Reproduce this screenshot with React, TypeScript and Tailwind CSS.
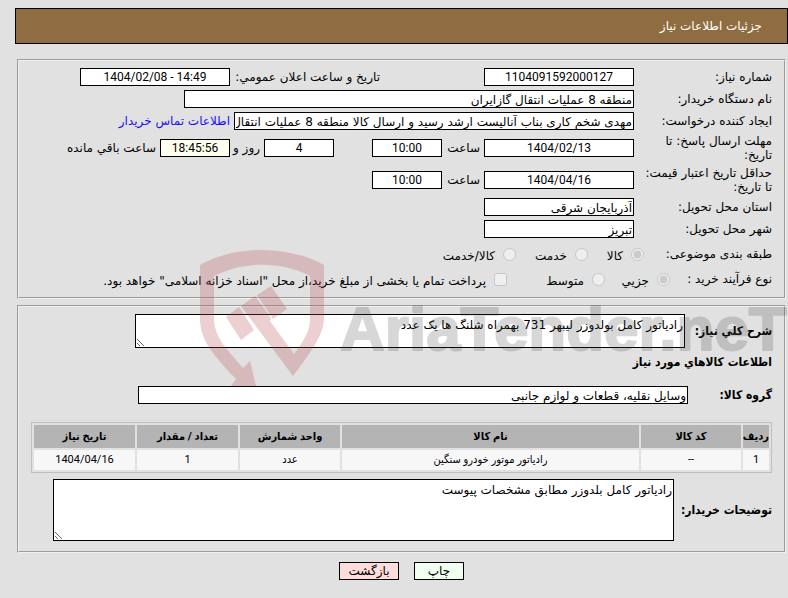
import type { ReactNode } from "react";

const FIELD =
  "h-[18px] min-w-0 border border-black px-[1px] pt-px text-[12px] leading-4 text-black outline-none";

const NUMERIC =
  "h-[18px] min-w-0 border border-black px-[1px] text-center text-[12px] leading-4 text-black outline-none [font-family:Roboto,'Liberation_Sans',sans-serif]";

const STRONG = "font-bold [font-family:'DejaVu_Sans_Condensed','DejaVu_Sans',sans-serif]";

function Row({ label, htmlFor, tall, children }: { label: string; htmlFor?: string; tall?: boolean; children: ReactNode }) {
  return (
    <div className={tall ? "flex h-8 items-center" : "flex h-[22px] items-center"}>
      <label htmlFor={htmlFor} className="w-[138px] shrink-0 pl-2 leading-[14px]">
        {label}
      </label>
      {children}
    </div>
  );
}

function Choice({ type, name, label, checked, gap }: { type: "radio" | "checkbox"; name: string; label: string; checked?: boolean; gap: string }) {
  return (
    <label className={`flex shrink-0 items-center gap-2 whitespace-nowrap ${gap}`}>
      <input type={type} name={name} defaultChecked={checked} disabled className="m-0 size-[13px] shrink-0" />
      <span className="pt-1">{label}</span>
    </label>
  );
}

function Watermark() {
  return (
    <svg className="pointer-events-none absolute top-0 left-0" width="788" height="598" viewBox="0 0 788 598" aria-hidden="true">
      <g fill="#b8444c" opacity="0.25">
        <path d="M200 265C236 245 288 245 324 265V319C323 335 314 348 293 376L258 329L241 306L255 296L271 318L270 321L294 354C305 339 310 331 310 318V276C281 261 243 261 214 276V318C214 337 226 348 243 368L250 361L256 386H231L236 379C214 356 200 340 200 319Z" />
        <path d="M226 317L239 307L254 330L241 340Z" />
        <path d="M257 295L271 286L287 309L273 319Z" />
      </g>
      <g opacity="0.2">
        <text
          x="340"
          y="350"
          direction="ltr"
          fontSize="62"
          fontWeight="700"
          fill="#3c3c3c"
          stroke="#3c3c3c"
          strokeWidth="2"
          strokeLinejoin="round"
          fontFamily="'Liberation Sans', sans-serif"
        >
          AriaTender.neT
        </text>
      </g>
    </svg>
  );
}

const HEADS = [
  { title: "ردیف", width: "w-[26px]" },
  { title: "کد کالا", width: "w-[100px]" },
  { title: "نام کالا", width: "" },
  { title: "واحد شمارش", width: "w-[100px]" },
  { title: "تعداد / مقدار", width: "w-[101px]" },
  { title: "تاریخ نیاز", width: "w-[101px]" },
];
const CELLS = ["1", "--", "رادیاتور موتور خودرو سنگین", "عدد", "1", "1404/04/16"];

const GROUP = "min-w-0 border-2 border-[#f0f0f0] px-3 [border-style:groove]";

export default function App() {
  return (
    <div
      dir="rtl"
      className="relative min-h-screen overflow-hidden bg-[#e1e1e1] pt-2 text-[12px] leading-4 text-black [font-family:'DejaVu_Sans',sans-serif]"
    >
      <header className="ml-[15px] flex h-9 items-center border border-black bg-[#8f6d41] pr-[25px] text-white">
        <h1>جزئیات اطلاعات نیاز</h1>
      </header>

      <main className="mt-[15px] mr-[2px] ml-[17px]">
        <fieldset className={`${GROUP} pt-[5px] pb-[7px]`}>
          <Row label="شماره نیاز:" htmlFor="no">
            <input id="no" readOnly defaultValue="1104091592000127" className={`${NUMERIC} w-[150px] bg-white`} />
            <label htmlFor="announce" className="mr-[104px] w-[150px] shrink-0 whitespace-nowrap">
              تاریخ و ساعت اعلان عمومي:
            </label>
            <input id="announce" dir="ltr" readOnly defaultValue="1404/02/08 - 14:49" className={`${NUMERIC} w-[150px] bg-white`} />
          </Row>
          <Row label="نام دستگاه خریدار:" htmlFor="org">
            <input id="org" readOnly defaultValue="منطقه 8 عملیات انتقال گازایران" className={`${FIELD} w-[450px] bg-white`} />
          </Row>
          <Row label="ایجاد کننده درخواست:" htmlFor="creator">
            <input
              id="creator"
              readOnly
              defaultValue="مهدی شخم کاری بناب آنالیست ارشد رسید و ارسال کالا منطقه 8 عملیات انتقال گازایران"
              className={`${FIELD} w-[400px] bg-white`}
            />
            <a href="#contact" className="mr-1 whitespace-nowrap text-[#1a0dff]">
              اطلاعات تماس خریدار
            </a>
          </Row>
          <Row label="مهلت ارسال پاسخ: تا تاریخ:" htmlFor="deadline" tall>
            <input id="deadline" readOnly defaultValue="1404/02/13" className={`${NUMERIC} w-[150px] bg-white`} />
            <label htmlFor="deadline-hour" className="w-[42px] shrink-0 pr-1">ساعت</label>
            <input id="deadline-hour" readOnly defaultValue="10:00" className={`${NUMERIC} w-[70px] bg-white`} />
            <input aria-label="روز" readOnly defaultValue="4" className={`${NUMERIC} mr-[38px] w-[70px] bg-white`} />
            <span className="w-[34px] shrink-0 pr-1 whitespace-nowrap">روز و</span>
            <input id="left" readOnly defaultValue="18:45:56" className={`${NUMERIC} w-[70px] bg-[#fffff0]`} />
            <label htmlFor="left" className="mr-1 whitespace-nowrap">ساعت باقي مانده</label>
          </Row>
          <Row label="حداقل تاریخ اعتبار قیمت: تا تاریخ:" htmlFor="valid" tall>
            <input id="valid" readOnly defaultValue="1404/04/16" className={`${NUMERIC} w-[150px] bg-white`} />
            <label htmlFor="valid-hour" className="w-[42px] shrink-0 pr-1">ساعت</label>
            <input id="valid-hour" readOnly defaultValue="10:00" className={`${NUMERIC} w-[70px] bg-white`} />
          </Row>
          <Row label="استان محل تحویل:" htmlFor="province">
            <input id="province" readOnly defaultValue="آذربایجان شرقی" className={`${FIELD} w-[150px] bg-white`} />
          </Row>
          <Row label="شهر محل تحویل:" htmlFor="city">
            <input id="city" readOnly defaultValue="تبریز" className={`${FIELD} w-[150px] bg-white`} />
          </Row>
          <div className="flex h-7 items-center">
            <span className="w-32 shrink-0">طبقه بندی موضوعی:</span>
            <Choice type="radio" name="kind" label="کالا" checked gap="w-14" />
            <Choice type="radio" name="kind" label="خدمت" gap="w-[72px]" />
            <Choice type="radio" name="kind" label="کالا/خدمت" gap="" />
          </div>
          <div className="flex h-[22px] items-center">
            <span className="w-[102px] shrink-0">نوع فرآیند خرید :</span>
            <Choice type="radio" name="process" label="جزیي" checked gap="w-[65px]" />
            <Choice type="radio" name="process" label="متوسط" gap="w-[98px]" />
            <Choice
              type="checkbox"
              name="treasury"
              label={'پرداخت تمام یا بخشی از مبلغ خرید،از محل "اسناد خزانه اسلامی" خواهد بود.'}
              gap=""
            />
          </div>
        </fieldset>

        <fieldset className={`${GROUP} mt-[6px] pt-[7px] pb-[10px]`}>
          <div className="flex items-center">
            <label htmlFor="summary" className={`${STRONG} w-[87px] shrink-0`}>شرح کلي نیاز:</label>
            <textarea
              id="summary"
              readOnly
              defaultValue="رادیاتور کامل بولدوزر لیبهر 731 بهمراه شلنگ ها یک عدد"
              className="block h-[34px] w-[550px] min-w-0 resize border border-black bg-white px-px py-[2px] text-[12px] leading-4 outline-none"
            />
          </div>
          <h2 className={`${STRONG} mt-[6px]`}>اطلاعات کالاهاي مورد نیاز</h2>
          <div className="mt-4 flex items-center">
            <label htmlFor="group" className={`${STRONG} w-[84px] shrink-0`}>گروه کالا:</label>
            <input id="group" readOnly defaultValue="وسایل نقلیه، قطعات و لوازم جانبی" className={`${FIELD} w-[550px] bg-white`} />
          </div>
          <table className="mt-[18px] w-full table-fixed border-separate border-spacing-[2px] border border-[#bfbfbf] text-center text-[11px] [font-family:Roboto,'DejaVu_Sans_Condensed','DejaVu_Sans',sans-serif]">
            <thead>
              <tr className="h-[23px] bg-[#b4b4b4]">
                {HEADS.map((h) => (
                  <th key={h.title} className={`p-0 font-bold whitespace-nowrap ${h.width}`}>{h.title}</th>
                ))}
              </tr>
            </thead>
            <tbody>
              <tr className="h-5 bg-[#f7f7f7]">
                {CELLS.map((c, i) => (
                  <td key={i} className="p-0">{c}</td>
                ))}
              </tr>
            </tbody>
          </table>
          <div className="mt-[6px] flex items-center">
            <label htmlFor="notes" className={`${STRONG} w-[98px] shrink-0 whitespace-nowrap`}>توضیحات خریدار:</label>
            <textarea
              id="notes"
              readOnly
              defaultValue="رادیاتور کامل بلدوزر مطابق مشخصات پیوست"
              className="block h-[62px] w-[621px] min-w-0 resize border border-black bg-white px-px py-[2px] text-[12px] leading-4 outline-none"
            />
          </div>
        </fieldset>
      </main>

      <div className="mt-[9px] flex justify-center gap-[15px] pl-[15px]">
        <button type="button" className="h-[18px] w-[50px] border border-black bg-[#f0fff0] leading-4">چاپ</button>
        <button type="button" className="h-[18px] w-[60px] border border-black bg-[#ffdcdc] leading-4">بازگشت</button>
      </div>
      <Watermark />
    </div>
  );
}
